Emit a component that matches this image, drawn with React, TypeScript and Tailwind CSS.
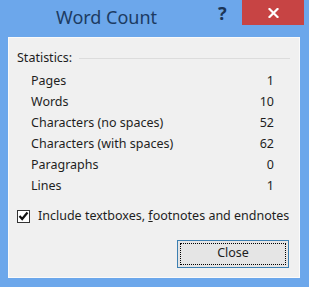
import { useState } from "react";

const stats = [
  { label: "Pages", value: 1 },
  { label: "Words", value: 10 },
  { label: "Characters (no spaces)", value: 52 },
  { label: "Characters (with spaces)", value: 62 },
  { label: "Paragraphs", value: 0 },
  { label: "Lines", value: 1 },
];

export default function App() {
  const [include, setInclude] = useState(true);

  return (
    <div className="w-[309px] h-[287px] bg-[#6ca7eb] flex flex-col font-['Noto_Sans',sans-serif] text-[12.5px] text-[#1e1e1e] overflow-hidden">
      <div className="h-[37px] flex items-start shrink-0">
        <h1 className="pl-[56px] pt-[4px] text-[18px] leading-[26px] text-[#1c3b63] w-[218px]">Word Count</h1>
        <span className="pt-[2px] w-[24px] text-[18px] leading-[22px] font-bold text-[#1b3556]">?</span>
        <button className="w-[62px] h-[25px] bg-[#c74444] flex items-center justify-center text-white">
          <svg width="11" height="10" viewBox="0 0 11 10">
            <path d="M1.5 1 L9.5 9 M9.5 1 L1.5 9" stroke="#fff" strokeWidth="2.2" strokeLinecap="square" />
          </svg>
        </button>
      </div>

      <div className="ml-[8px] w-[292px] h-[241px] bg-[#f0f0f0] border border-[#fafafa] flex flex-col">
        <div className="flex items-center pl-[8px] pr-[9px] pt-[10px] h-[30px]">
          <span>Statistics:</span>
          <div className="flex-1 ml-[7px] h-px bg-[#dcdcdc]" />
        </div>
        <div className="flex flex-col pl-[22px] pr-[25px] pt-[3px]">
          {stats.map((s) => (
            <div key={s.label} className="flex justify-between h-[21px] items-center">
              <span>{s.label}</span>
              <span>{s.value}</span>
            </div>
          ))}
        </div>
        <label className="flex items-center pl-[8px] mt-[10px] gap-[8px] cursor-pointer">
          <span
            className="w-[13px] h-[13px] border border-[#333] bg-white flex items-center justify-center"
            onClick={() => setInclude((p) => !p)}
          >
            {include && (
              <svg width="11" height="10" viewBox="0 0 11 10">
                <path d="M1.5 5 L4.2 8 L9.5 1.5" stroke="#111" strokeWidth="2.2" fill="none" />
              </svg>
            )}
          </span>
          <span>
            Include textboxes, <span className="underline">f</span>ootnotes and endnotes
          </span>
        </label>
        <div className="flex justify-end pr-[10px] mt-[14px]">
          <button className="w-[112px] h-[28px] border border-[#3c7fb1] bg-[#e5e5e5] p-[2px]">
            <span className="w-full h-full border border-dotted border-black flex items-center justify-center">Close</span>
          </button>
        </div>
      </div>
    </div>
  );
}
